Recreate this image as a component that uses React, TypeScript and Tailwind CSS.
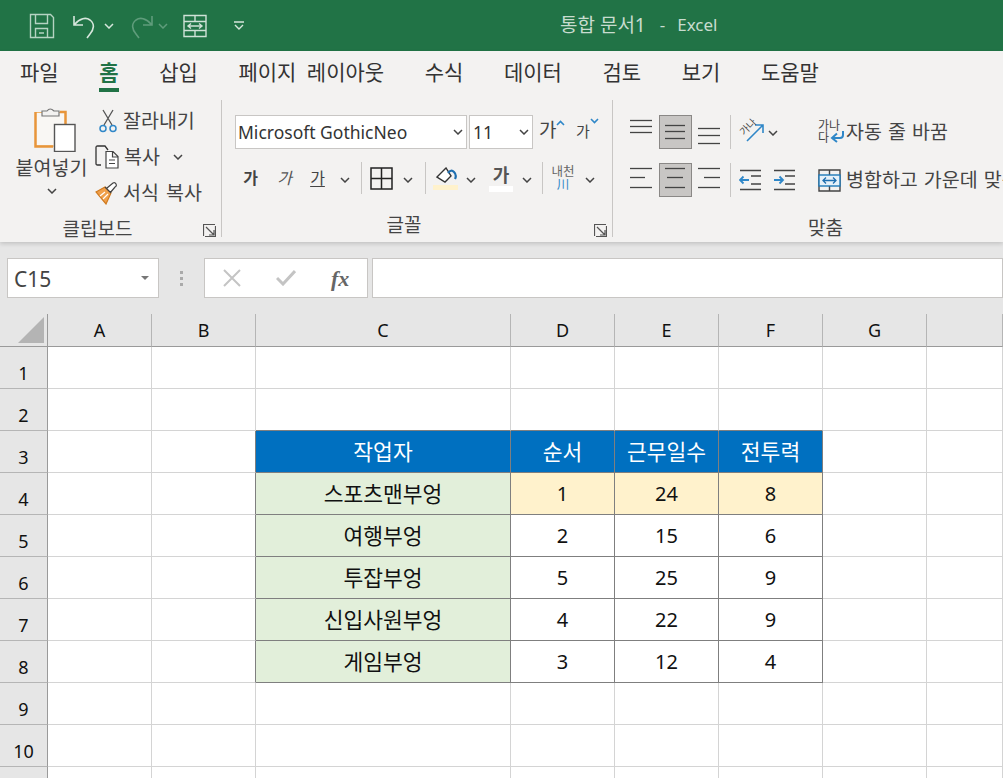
const tabs = ["파일", "홈", "삽입", "페이지 레이아웃", "수식", "데이터", "검토", "보기", "도움말"];

const rows = [
  ["작업자", "순서", "근무일수", "전투력"],
  ["스포츠맨부엉", "1", "24", "8"],
  ["여행부엉", "2", "15", "6"],
  ["투잡부엉", "5", "25", "9"],
  ["신입사원부엉", "4", "22", "9"],
  ["게임부엉", "3", "12", "4"],
];

function Chevron({ className = "", color = "#444" }: { className?: string; color?: string }) {
  return (
    <svg width="10" height="6" viewBox="0 0 10 6" className={className}>
      <path d="M1 1l4 4 4-4" fill="none" stroke={color} strokeWidth="1.5" />
    </svg>
  );
}

function Launcher() {
  return (
    <svg width="13" height="13" viewBox="0 0 13 13" className="absolute right-[5px] bottom-0">
      <path d="M.5 12V.5H12M3 3l8 8M11 6v5H6M2 12.5h10.500V2" fill="none" stroke="#555" strokeWidth="1.200" />
    </svg>
  );
}

function Sep({ className = "" }: { className?: string }) {
  return <div className={`w-px bg-[#c8c6c4] ${className}`} />;
}

function Lines({ y, x = [[0, 22], [0, 22], [0, 22]] }: { y: number[]; x?: number[][] }) {
  return (
    <svg width="24" height="24" viewBox="0 0 24 24" className="overflow-visible">
      {y.map((v, i) => (
        <path key={i} d={`M${x[i][0]} ${v}.5H${x[i][1]}`} stroke="#444" strokeWidth="1.300" />
      ))}
    </svg>
  );
}

function AlignButton({ active, children }: { active?: boolean; children: React.ReactNode }) {
  return (
    <div className={`w-[33px] h-[34px] flex items-center justify-center ${active ? "bg-[#c8c6c4] border border-[#8a8886]" : ""}`}>
      {children}
    </div>
  );
}

function TitleBar() {
  return (
    <div className="h-[51px] bg-[#217346] flex items-center shrink-0 relative">
      <div className="flex items-center pl-[29px]">
        <svg width="26" height="26" viewBox="0 0 26 26">
          <path d="M1.500 1.500h20l3 3v20h-23zM6.500 1.500v9h12v-9M6.500 24.500v-9h12v9M10 20h5" fill="none" stroke="#b5d3c2" strokeWidth="1.400" />
        </svg>
        <svg width="26" height="26" viewBox="0 0 26 26" className="ml-[17px]">
          <path d="M2 3v9h9M2.500 11.500C8 5 14 4 18 7c5 4 4 9 0 14l-3 4" fill="none" stroke="#d6e6dc" strokeWidth="1.600" />
        </svg>
        <Chevron color="#d6e6dc" className="ml-[6px]" />
        <svg width="26" height="26" viewBox="0 0 26 26" className="ml-[14px]">
          <path d="M24 3v9h-9M23.500 11.500C18 5 12 4 8 7c-5 4-4 9 0 14l3 4" fill="none" stroke="#5f9c7b" strokeWidth="1.600" />
        </svg>
        <Chevron color="#5f9c7b" className="ml-[4px]" />
        <svg width="24" height="24" viewBox="0 0 24 24" className="ml-[15px]">
          <path d="M1 1.500h22v21H1zM1 7.500h22M1 16.500h22M12 1.500v6M12 16.500v6M5 12h14M8 9.500L5 12l3 2.500M16 9.500l3 2.500-3 2.500" fill="none" stroke="#cfe2d7" strokeWidth="1.400" />
        </svg>
        <svg width="10" height="10" viewBox="0 0 10 10" className="ml-[27px]">
          <path d="M0 1h10M1 4l4 4 4-4" fill="none" stroke="#d6e6dc" strokeWidth="1.400" />
        </svg>
      </div>
      <div className="absolute left-[560px] top-[14px] flex text-[17px] leading-[22px] text-[#c8dccf] whitespace-nowrap">
        <span className="text-[19px]">통합 문서1</span>
        <span className="ml-[14px]">-</span>
        <span className="ml-[12px]">Excel</span>
      </div>
    </div>
  );
}

function Tabs() {
  return (
    <div className="h-[44px] flex gap-[40.600px] pl-[20px] pt-[8px] shrink-0 text-[21px] leading-[26px] [word-spacing:5px] text-[#333] whitespace-nowrap">
      {tabs.map((t) => (
        <div key={t} className={t === "홈" ? "relative font-bold text-[#217346]" : ""}>
          {t}
          {t === "홈" && <div className="absolute left-0 right-0 top-[29px] h-[4px] bg-[#217346]" />}
        </div>
      ))}
    </div>
  );
}

function Clipboard() {
  return (
    <div className="w-[222px] shrink-0 relative flex flex-col border-r border-[#c8c6c4] my-[5px] text-[19.500px] leading-[24px] text-[#444]">
      <div className="flex h-[112px] pt-[6px] pl-[15px]">
        <div className="w-[73px] flex flex-col items-center">
          <svg width="42" height="46" viewBox="0 0 42 46" className="ml-[6px]">
            <path d="M1.500 6.500h30v33.500h-30z" fill="#f9f7f4" stroke="#f0b46a" strokeWidth="1" />
            <path d="M1.500 6v34.500H19M26 6h5.500v12" fill="none" stroke="#e8953a" strokeWidth="2.500" />
            <path d="M8 10V5h5q3-4 7 0h5v5z" fill="#f3f2f1" stroke="#777" strokeWidth="1.200" />
            <rect x="20.500" y="18.500" width="20.500" height="27" fill="#fff" stroke="#555" strokeWidth="1.400" />
          </svg>
          <div className="mt-[4px] whitespace-nowrap">붙여넣기</div>
          <Chevron className="mt-[8px]" />
        </div>
        <div className="ml-[7px] flex flex-col gap-[12px] pt-[3px] whitespace-nowrap">
          <div className="flex items-center">
            <svg width="18" height="24" viewBox="0 0 18 24" className="ml-[4px]">
              <path d="M4 1l9 15M14 1L5 16" stroke="#555" strokeWidth="1.300" fill="none" />
              <circle cx="4" cy="19.500" r="3" fill="none" stroke="#2f87c8" strokeWidth="1.500" />
              <circle cx="14" cy="19.500" r="3" fill="none" stroke="#2f87c8" strokeWidth="1.500" />
            </svg>
            <span className="ml-[6px]">잘라내기</span>
          </div>
          <div className="flex items-center">
            <svg width="26" height="24" viewBox="0 0 26 24" className="mr-[-2px]">
              <path d="M6 20H2.500Q1 20 1 18.500V2.500Q1 1 2.500 1H10l3 4" fill="none" stroke="#333" strokeWidth="1.300" />
              <path d="M11 6.500h7l5 5V23H11zM17.500 6.500V12H23M14 15h6M14 18.500h6" fill="#fff" stroke="#444" strokeWidth="1.200" />
            </svg>
            <span className="ml-[5px]">복사</span>
            <Chevron className="ml-[13px]" />
          </div>
          <div className="flex items-center">
            <svg width="24" height="24" viewBox="0 0 24 24">
              <path d="M1 11l9-5 6 6-5 11z" fill="#f0a04b" stroke="#d07a1f" strokeWidth="1.200" />
              <path d="M5 15l5-4M8 18l5-5" stroke="#fff" strokeWidth="1.200" />
              <path d="M10 6l6 6M12 7l6-5q2-1 3 1t-1 3l-5 6" fill="#fff" stroke="#444" strokeWidth="1.200" />
            </svg>
            <span className="ml-[4px] [word-spacing:2px]">서식 복사</span>
          </div>
        </div>
      </div>
      <div className="text-center pr-[26px] pt-[12px] text-[19px]">클립보드</div>
      <Launcher />
    </div>
  );
}

function FontGroup() {
  return (
    <div className="w-[391px] shrink-0 relative flex flex-col border-r border-[#c8c6c4] my-[5px] text-[#444]">
      <div className="h-[112px]">
        <div className="flex items-center pl-[13px] pt-[15px]">
          <div className="w-[232px] h-[34px] bg-white border border-[#c8c6c4] flex items-center justify-between pl-[2px] pr-[3px] text-[17.500px] text-[#333]">
            Microsoft GothicNeo
            <Chevron />
          </div>
          <div className="ml-[2px] w-[64px] h-[34px] bg-white border border-[#c8c6c4] flex items-center justify-between pl-[3px] pr-[3px] text-[17.500px] text-[#333]">
            11
            <Chevron />
          </div>
          <div className="relative ml-[6px] w-[30px] h-[34px] text-[19px] leading-[30px]">
            가
            <svg width="9" height="6" viewBox="0 0 9 6" className="absolute left-[17px] top-[5px]">
              <path d="M1 5l3.500-3.500L8 5" fill="none" stroke="#2f87c8" strokeWidth="1.600" />
            </svg>
          </div>
          <div className="relative ml-[7px] w-[26px] h-[34px] text-[15px] leading-[32px]">
            가
            <svg width="9" height="6" viewBox="0 0 9 6" className="absolute left-[14px] top-[3px]">
              <path d="M1 1l3.500 3.500L8 1" fill="none" stroke="#2f87c8" strokeWidth="1.600" />
            </svg>
          </div>
        </div>
        <div className="flex items-center h-[32px] mt-[13px] pl-[21px] text-[16px]">
          <span className="w-[15px] text-center font-bold">가</span>
          <span className="w-[15px] text-center italic ml-[19px] text-[#555]">가</span>
          <span className="w-[17px] text-center underline underline-offset-2 ml-[17px]">가</span>
          <Chevron className="ml-[14px] mt-[3px]" />
          <Sep className="h-[32px] ml-[11px]" />
          <svg width="23" height="23" viewBox="0 0 23 23" className="ml-[8px]">
            <path d="M1 1h21v21H1zM11.500 1v21M1 11.500h21" fill="none" stroke="#222" strokeWidth="1.500" />
          </svg>
          <Chevron className="ml-[10px] mt-[3px]" />
          <Sep className="h-[32px] ml-[12px]" />
          <div className="ml-[7px] w-[25px] flex flex-col items-center">
            <svg width="22" height="18" viewBox="0 0 22 18">
              <path d="M2 10l7-7 2-2 5 8-6 6z" fill="#fff" stroke="#333" strokeWidth="1.400" />
              <path d="M13 6q3-4 6-1t1 7" fill="none" stroke="#1f6fb0" strokeWidth="2.200" />
            </svg>
            <div className="w-[25px] h-[5px] bg-[#fff2cc]" />
          </div>
          <Chevron className="ml-[8px] mt-[3px]" />
          <div className="ml-[13px] w-[24px] flex flex-col items-center">
            <span className="font-bold text-[18px] leading-[21px] text-[#555]">가</span>
            <div className="w-[24px] h-[6px] bg-white" />
          </div>
          <Chevron className="ml-[9px] mt-[3px]" />
          <Sep className="h-[32px] ml-[10px]" />
          <div className="ml-[7px] w-[26px] flex flex-col items-center text-[12.500px] leading-[13px] text-[#666]">
            <span>내천</span>
            <span className="text-[#2f87c8]">川</span>
          </div>
          <Chevron className="ml-[9px] mt-[3px]" />
        </div>
      </div>
      <div className="text-center pr-[26px] pt-[13px] text-[19px] leading-[24px]">글꼴</div>
      <Launcher />
    </div>
  );
}

function AlignGroup() {
  return (
    <div className="flex-1 min-w-0 flex flex-col my-[5px] text-[19.500px] leading-[24px] text-[#444]">
      <div className="flex h-[112px] pt-[9px] pl-[12px]">
        <div className="flex flex-col pt-[6px] gap-[14px] h-[95px]">
          <div className="flex items-center gap-[1px] h-[34px]">
            <AlignButton>
              <Lines y={[0, 6, 12]} />
            </AlignButton>
            <AlignButton active>
              <Lines y={[5, 11, 18]} x={[[1, 21], [1, 21], [1, 21]]} />
            </AlignButton>
            <AlignButton>
              <Lines y={[8, 15, 23]} />
            </AlignButton>
            <Sep className="h-[34px] ml-[3px]" />
            <svg width="28" height="28" viewBox="0 0 28 28" className="ml-[7px] overflow-visible">
              <path d="M8 23L24 7M16 7h8v8" fill="none" stroke="#2f87c8" strokeWidth="1.600" />
              <text x="5" y="18" fontSize="10" fill="#444" transform="rotate(-45 5 18)">가나</text>
            </svg>
            <Chevron className="mt-[2px]" />
          </div>
          <div className="flex items-center gap-[1px] h-[34px]">
            <AlignButton>
              <Lines y={[0, 9, 19]} x={[[0, 22], [0, 15], [0, 22]]} />
            </AlignButton>
            <AlignButton active>
              <Lines y={[0, 9, 19]} x={[[1, 21], [3, 19], [1, 21]]} />
            </AlignButton>
            <AlignButton>
              <Lines y={[0, 9, 19]} x={[[0, 22], [6, 22], [0, 22]]} />
            </AlignButton>
            <Sep className="h-[34px] ml-[3px]" />
            <svg width="24" height="24" viewBox="0 0 24 24" className="ml-[7px]">
              <path d="M1 2.500h21M12 8h10M12 16h10M1 21.500h21" stroke="#444" strokeWidth="1.300" />
              <path d="M1 12h9M4.500 8.500L1 12l3.500 3.500" fill="none" stroke="#2f87c8" strokeWidth="1.800" />
            </svg>
            <svg width="24" height="24" viewBox="0 0 24 24" className="ml-[9px]">
              <path d="M1 2.500h21M12 8h10M12 16h10M1 21.500h21" stroke="#444" strokeWidth="1.300" />
              <path d="M1 12h9M6.500 8.500L10 12l-3.500 3.500" fill="none" stroke="#2f87c8" strokeWidth="1.800" />
            </svg>
          </div>
        </div>
        <Sep className="h-[92px] ml-[11px]" />
        <div className="flex flex-col pt-[6px] gap-[14px] pl-[10px] whitespace-nowrap">
          <div className="flex items-center h-[34px]">
            <div className="relative w-[27px] h-[30px] text-[12px] leading-[12px]">
              <div className="mt-[3px]">가나</div>
              <div>다</div>
              <svg width="15" height="13" viewBox="0 0 15 13" className="absolute left-[12px] top-[13px]">
                <path d="M13 1v4q0 3-3 3H2M7 3.500L2 8l5 4" fill="none" stroke="#2f87c8" strokeWidth="2" />
              </svg>
            </div>
            <span className="ml-[1px] [word-spacing:1px]">자동 줄 바꿈</span>
          </div>
          <div className="flex items-center h-[34px]">
            <svg width="23" height="23" viewBox="0 0 23 23" className="shrink-0">
              <path d="M1 1h21v21H1zM11.500 1v5M11.500 17v5" fill="none" stroke="#444" strokeWidth="1.400" />
              <rect x="1" y="6" width="21" height="11" fill="#e6f1f9" stroke="#1f7ab8" strokeWidth="1.400" />
              <path d="M5 11.500h13M8 8.500l-3 3 3 3M15 8.500l3 3-3 3" fill="none" stroke="#1f6fb0" strokeWidth="1.300" />
            </svg>
            <span className="ml-[5px] [word-spacing:1px]">병합하고 가운데 맞춤</span>
          </div>
        </div>
      </div>
      <div className="w-[425px] text-center pt-[12px] text-[19px]">맞춤</div>
    </div>
  );
}

function FormulaBar() {
  return (
    <div className="h-[72px] bg-[#e6e6e6] flex pl-[7px] pt-[16px] shrink-0 text-[#444]">
      <div className="w-[152px] h-[40px] bg-white border border-[#c8c6c4] flex items-center justify-between pl-[6px] pr-[9px] text-[21px]">
        <span className="pt-[3px]">C15</span>
        <svg width="8" height="4" viewBox="0 0 8 4">
          <path d="M0 0h8L4 4z" fill="#777" />
        </svg>
      </div>
      <div className="w-[45px] h-[40px] flex flex-col items-center justify-center gap-[3px]">
        <div className="w-[3px] h-[3px] bg-[#aaa]" />
        <div className="w-[3px] h-[3px] bg-[#aaa]" />
        <div className="w-[3px] h-[3px] bg-[#aaa]" />
      </div>
      <div className="w-[164px] h-[40px] bg-white border border-[#c8c6c4] flex items-center pl-[18px]">
        <svg width="18" height="18" viewBox="0 0 18 18">
          <path d="M1 1l16 16M17 1L1 17" stroke="#c4c4c4" strokeWidth="2" />
        </svg>
        <svg width="20" height="16" viewBox="0 0 20 16" className="ml-[35px]">
          <path d="M1 8l6 6L19 1" fill="none" stroke="#c4c4c4" strokeWidth="3" />
        </svg>
        <span className="ml-[35px] font-['Liberation_Serif',serif] italic font-bold text-[22px] text-[#666]">fx</span>
      </div>
      <div className="ml-[4px] flex-1 h-[40px] bg-white border border-[#c8c6c4]" />
    </div>
  );
}

function Sheet() {
  const cols = ["A", "B", "C", "D", "E", "F", "G", ""];
  return (
    <div className="flex-1 min-h-0 overflow-hidden grid grid-cols-[48px_104px_104px_255px_104px_104px_104px_104px_1fr] grid-rows-[33px_repeat(11,42px)] text-[#111]">
      <div className="bg-[#e6e6e6] border-r border-b border-[#9a9a9a] flex items-end justify-end pr-[3px] pb-[3px]">
        <svg width="26" height="26" viewBox="0 0 26 26">
          <path d="M26 0v26H0z" fill="#b4b4b4" />
        </svg>
      </div>
      {cols.map((c, i) => (
        <div key={i} className="bg-[#e6e6e6] border-r border-b border-r-[#b5b5b5] border-b-[#9a9a9a] flex items-center justify-center text-[18px]">
          {c}
        </div>
      ))}
      {Array.from({ length: 11 }, (_, r) => r + 1).map((n) => {
        const row = n >= 3 && n <= 8 ? rows[n - 3] : null;
        return (
          <div key={n} className="contents">
            <div className="bg-[#e6e6e6] border-r border-b border-r-[#9a9a9a] border-b-[#b5b5b5] flex items-end justify-center text-[18px] leading-[30px]">
              {n}
            </div>
            {cols.map((_, i) => {
              const inTable = row && i >= 2 && i <= 5;
              const leftOfTable = row && i === 1;
              const aboveTable = n === 2 && i >= 2 && i <= 5;
              const korean = inTable && (n === 3 || i === 2);
              let bg = "bg-white text-[#111]";
              if (inTable && n === 3) bg = "bg-[#0070c0] text-white";
              else if (inTable && i === 2) bg = "bg-[#e2efda]";
              else if (inTable && n === 4) bg = "bg-[#fff2cc]";
              return (
                <div
                  key={i}
                  className={`flex items-center justify-center border-r border-b ${korean ? "text-[21.500px] pt-[2px]" : "text-[20px]"} ${bg} ${inTable || leftOfTable ? "border-r-[#7f7f7f]" : "border-r-[#d4d4d4]"} ${inTable || aboveTable ? "border-b-[#7f7f7f]" : "border-b-[#d4d4d4]"}`}
                >
                  {inTable ? row[i - 2] : ""}
                </div>
              );
            })}
          </div>
        );
      })}
    </div>
  );
}

export default function App() {
  return (
    <div className="w-[1003px] h-[778px] overflow-hidden flex flex-col bg-white font-['Noto_Sans','Noto_Sans_CJK_KR',sans-serif]">
      <TitleBar />
      <div className="h-[191px] bg-[#f3f2f1] flex flex-col shrink-0 relative z-10 shadow-[0_2px_4px_rgba(0,0,0,0.15)]">
        <Tabs />
        <div className="flex flex-1 min-h-0">
          <Clipboard />
          <FontGroup />
          <AlignGroup />
        </div>
      </div>
      <FormulaBar />
      <Sheet />
    </div>
  );
}
